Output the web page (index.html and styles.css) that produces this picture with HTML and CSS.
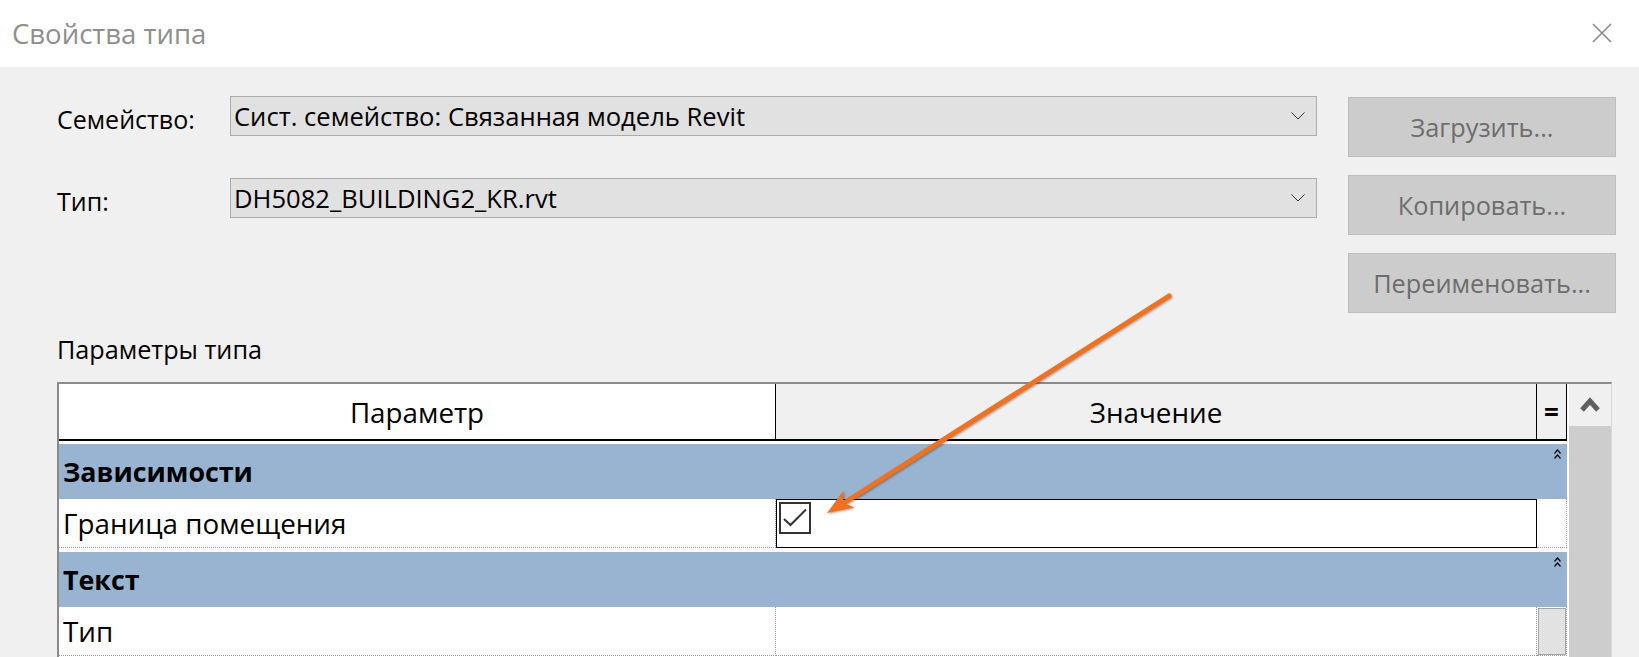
FILE: index.html
```html
<!DOCTYPE html>
<html lang="ru">
<head>
    <meta charset="UTF-8">
    <meta name="viewport" content="width=device-width, initial-scale=1.0">
    <title>Свойства типа</title>
    <link rel="stylesheet" href="styles.css">
</head>
<body>
    <div class="dialog">
        <header class="titlebar">
            <span class="title">Свойства типа</span>
            <button class="close-btn" aria-label="Закрыть">
                <svg width="20" height="20" viewBox="0 0 20 20">
                    <path d="M1 1 L19 19 M19 1 L1 19" stroke="#8a8a8a" stroke-width="1.6" fill="none"/>
                </svg>
            </button>
        </header>

        <main class="content">
            <section class="type-select">
                <div class="fields">
                    <div class="field">
                        <span class="field-label">Семейство:</span>
                        <div class="combo">
                            <span>Сист. семейство: Связанная модель Revit</span>
                            <svg width="14" height="8" viewBox="0 0 14 8">
                                <path d="M0.5 0.5 L7 7 L13.5 0.5" stroke="#333" stroke-width="1" fill="none"/>
                            </svg>
                        </div>
                    </div>
                    <div class="field">
                        <span class="field-label">Тип:</span>
                        <div class="combo">
                            <span>DH5082_BUILDING2_KR.rvt</span>
                            <svg width="14" height="8" viewBox="0 0 14 8">
                                <path d="M0.5 0.5 L7 7 L13.5 0.5" stroke="#333" stroke-width="1" fill="none"/>
                            </svg>
                        </div>
                    </div>
                </div>
                <div class="actions">
                    <button class="action" disabled>Загрузить...</button>
                    <button class="action" disabled>Копировать...</button>
                    <button class="action" disabled>Переименовать...</button>
                </div>
            </section>

            <div class="section-label">Параметры типа</div>

            <div class="props">
                <div class="sheet">
                    <div class="row head">
                        <div class="cell c-name">Параметр</div>
                        <div class="cell c-value">Значение</div>
                        <div class="cell c-eq">=</div>
                    </div>

                    <div class="group">
                        <span>Зависимости</span>
                        <svg class="fold" width="7" height="11" viewBox="0 0 7 11">
                            <path d="M0.5 4.5 L3.5 1 L6.5 4.5 M0.5 9.5 L3.5 6 L6.5 9.5" stroke="#000" stroke-width="1.2" fill="none"/>
                        </svg>
                    </div>
                    <div class="row">
                        <div class="cell c-name">Граница помещения</div>
                        <div class="cell c-value is-focused">
                            <span class="check">
                                <svg width="28" height="28" viewBox="0 0 28 28">
                                    <path d="M3 15 L9.5 21 L25 5.5" stroke="#333" stroke-width="2" fill="none"/>
                                </svg>
                            </span>
                        </div>
                        <div class="cell c-eq"></div>
                    </div>

                    <div class="group">
                        <span>Текст</span>
                        <svg class="fold" width="7" height="11" viewBox="0 0 7 11">
                            <path d="M0.5 4.5 L3.5 1 L6.5 4.5 M0.5 9.5 L3.5 6 L6.5 9.5" stroke="#000" stroke-width="1.2" fill="none"/>
                        </svg>
                    </div>
                    <div class="row">
                        <div class="cell c-name">Тип</div>
                        <div class="cell c-value"></div>
                        <div class="cell c-eq"><span class="eq-btn"></span></div>
                    </div>
                </div>

                <div class="vscroll">
                    <div class="vscroll-up">
                        <svg width="20" height="16" viewBox="0 0 20 16">
                            <path d="M2 14 L10 5 L18 14" stroke="#606060" stroke-width="5" fill="none" stroke-linejoin="miter"/>
                        </svg>
                    </div>
                    <div class="vscroll-track"></div>
                </div>
            </div>
        </main>

        <!-- callout arrow pointing at the checkbox -->
        <svg class="callout" width="1639" height="657" viewBox="0 0 1639 657">
            <line x1="1169" y1="296" x2="844" y2="503" stroke="#f4701a" stroke-width="5" stroke-linecap="round"/>
            <polygon points="827,513 843.5,490.7 843,502.8 854.3,507.5" fill="#f4701a"/>
        </svg>
    </div>
</body>
</html>
```

FILE: styles.css
```css
* {
    box-sizing: border-box;
}

html, body {
    margin: 0;
}

body {
    width: 1639px;
    height: 657px;
    overflow: hidden;
    background-color: #f0f0f0;
    font-family: "Open Sans", "Noto Sans", sans-serif;
    color: #000;
}

.dialog {
    position: relative;
    height: 657px;
}

/* title bar */
.titlebar {
    height: 67px;
    background-color: #fff;
    display: flex;
    align-items: center;
    justify-content: space-between;
    padding: 0 27px 0 12px;
}

.title {
    font-size: 27.5px;
    color: #8e8e8e;
    margin-top: -1px;
}

.close-btn {
    border: none;
    background: none;
    padding: 0;
    width: 20px;
    height: 20px;
    margin-top: -2px;
}

.close-btn svg {
    display: block;
}

/* body */
.content {
    padding: 0 23px 0 57px;
}

.type-select {
    display: flex;
    height: 246px;
}

.fields {
    width: 1260px;
    padding-top: 29px;
    display: flex;
    flex-direction: column;
    gap: 42px;
}

.field {
    display: flex;
    align-items: center;
    height: 40px;
}

.field-label {
    width: 173px;
    font-size: 25px;
    margin-top: 6px;
}

.combo {
    flex: 1;
    height: 40px;
    display: flex;
    align-items: center;
    justify-content: space-between;
    padding: 0 11px 0 3px;
    background-color: #e1e1e1;
    border: 1px solid #acacac;
    font-size: 25.6px;
}

.actions {
    margin-left: 31px;
    width: 268px;
    padding-top: 30px;
    display: flex;
    flex-direction: column;
    gap: 18px;
}

.action {
    height: 60px;
    background-color: #cccccc;
    border: 1px solid #bdbdbd;
    color: #6d6d6d;
    font-family: inherit;
    font-size: 25.3px;
    padding: 0;
}

.section-label {
    font-size: 25.2px;
    line-height: 34px;
    margin: 19px 0 16px;
}

/* property grid */
.props {
    width: 1555px;
    height: 275px;
    display: flex;
    background-color: #fff;
    border-top: 2px solid #8a8a8a;
    border-left: 2px solid #8a8a8a;
    border-right: 1px solid #d9d9d9;
    overflow: hidden;
}

.sheet {
    width: 1508px;
}

.row {
    display: flex;
    height: 49px;
}

.cell {
    font-size: 27.8px;
    display: flex;
    align-items: center;
}

.c-name {
    width: 717px;
    padding-left: 4px;
    border-right: 1px dotted #9a9a9a;
    border-bottom: 1px dotted #9a9a9a;
}

.c-value {
    width: 761px;
    border-right: 1px dotted #9a9a9a;
    border-bottom: 1px dotted #9a9a9a;
}

.c-eq {
    width: 30px;
    align-items: flex-start;
    border-right: 1px dotted #9a9a9a;
    border-bottom: 1px dotted #9a9a9a;
}

.row.head {
    height: 57px;
    border-bottom: 2px solid #000;
    margin-bottom: 3px;
}

.head .cell {
    justify-content: center;
    border-bottom: none;
    border-right: 1px solid #000;
    background-color: #f0f0f0;
}

.head .c-name {
    background-color: #fff;
    padding-left: 0;
}

.head .c-eq {
    align-items: center;
    font-weight: bold;
    font-size: 26px;
}

.group {
    height: 55px;
    display: flex;
    align-items: center;
    justify-content: space-between;
    padding: 0 6px 0 4px;
    background-color: #99b4d1;
    font-size: 26.8px;
    font-weight: bold;
}

.group + .row + .group {
    margin-top: 4px;
}

.fold {
    align-self: flex-start;
    margin-top: 5px;
}

.c-value.is-focused {
    border: 1px solid #000;
    align-items: flex-start;
    padding: 2px;
}

.check {
    width: 32px;
    height: 32px;
    border: 2px solid #333;
    display: flex;
    align-items: center;
    justify-content: center;
}

.eq-btn {
    display: block;
    width: 28px;
    height: 47px;
    margin: 1px 0 0 1px;
    background-color: #e1e2e1;
    border: 1px solid #a6a6a6;
}

/* vertical scrollbar */
.vscroll {
    width: 42px;
    margin-left: 2px;
    background-color: #cdcdcd;
}

.vscroll-up {
    height: 42px;
    background-color: #f0f0f0;
    display: flex;
    justify-content: center;
    padding-top: 12px;
}

.vscroll-up svg {
    display: block;
}

.callout {
    position: absolute;
    left: 0;
    top: 0;
    pointer-events: none;
    filter: drop-shadow(1px 1px 1px rgba(0, 0, 0, 0.35));
}
```
